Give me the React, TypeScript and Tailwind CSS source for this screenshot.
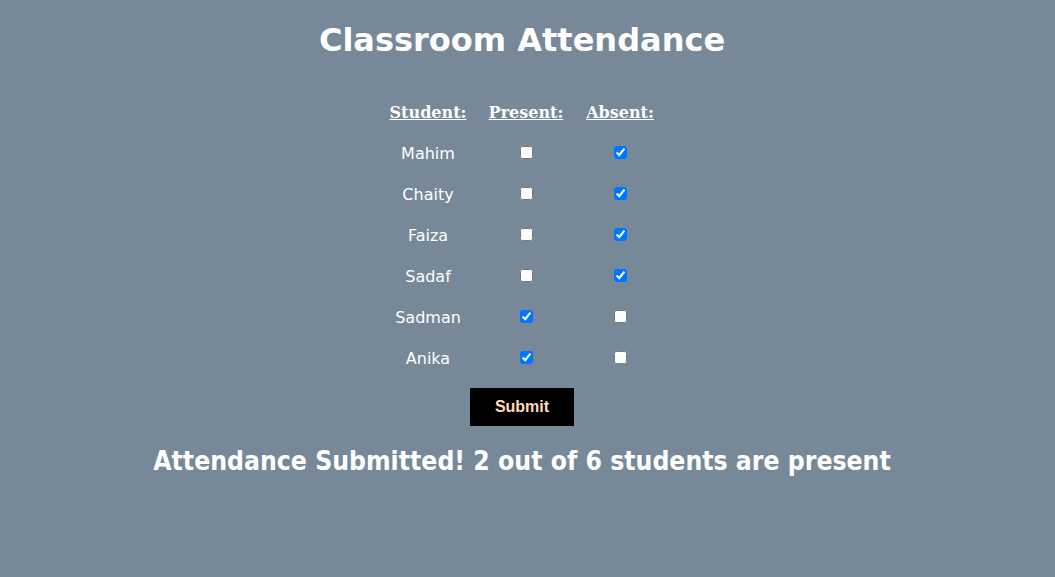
const students = [
  { name: "Mahim", present: false },
  { name: "Chaity", present: false },
  { name: "Faiza", present: false },
  { name: "Sadaf", present: false },
  { name: "Sadman", present: true },
  { name: "Anika", present: true },
];

function App() {
  const presentCount = students.filter((s) => s.present).length;

  return (
    <div className="min-h-[577px] w-full bg-[#778899] text-white font-['DejaVu_Sans',Verdana,sans-serif]">
      <div className="flex flex-col items-center pr-[11px] pt-6">
        <h1 className="text-[32px] font-bold leading-8">Classroom Attendance</h1>

        <div className="mt-[35px] grid grid-cols-[99px_99px_89px] text-center">
          <div className="flex h-[41px] items-center justify-center pt-[2px] font-['DejaVu_Serif',Georgia,serif] text-base font-bold underline">
            Student:
          </div>
          <div className="flex h-[41px] items-center justify-center pt-[2px] pr-[2px] font-['DejaVu_Serif',Georgia,serif] text-base font-bold underline">
            Present:
          </div>
          <div className="flex h-[41px] items-center justify-center pt-[2px] pr-[2px] font-['DejaVu_Serif',Georgia,serif] text-base font-bold underline">
            Absent:
          </div>

          {students.map((s) => (
            <div key={s.name} className="contents">
              <div className="flex h-[41px] items-center justify-center pt-[2px] text-base">{s.name}</div>
              <div className="flex h-[41px] items-center justify-center pr-[2px]">
                <input type="checkbox" defaultChecked={s.present} className="m-0 h-[13px] w-[13px]" />
              </div>
              <div className="flex h-[41px] items-center justify-center pr-[2px]">
                <input type="checkbox" defaultChecked={!s.present} className="m-0 h-[13px] w-[13px]" />
              </div>
            </div>
          ))}
        </div>

        <button className="mt-[10px] h-[38px] w-[104px] bg-black font-['Liberation_Sans',Arial,sans-serif] text-base font-bold text-[#ffdab9]">
          Submit
        </button>

        <p className="mt-[19px] font-['DejaVu_Sans_Condensed','DejaVu_Sans',sans-serif] text-[26.3px] font-bold leading-8">
          Attendance Submitted! {presentCount} out of {students.length} students are present
        </p>
      </div>
    </div>
  );
}

export default App;
